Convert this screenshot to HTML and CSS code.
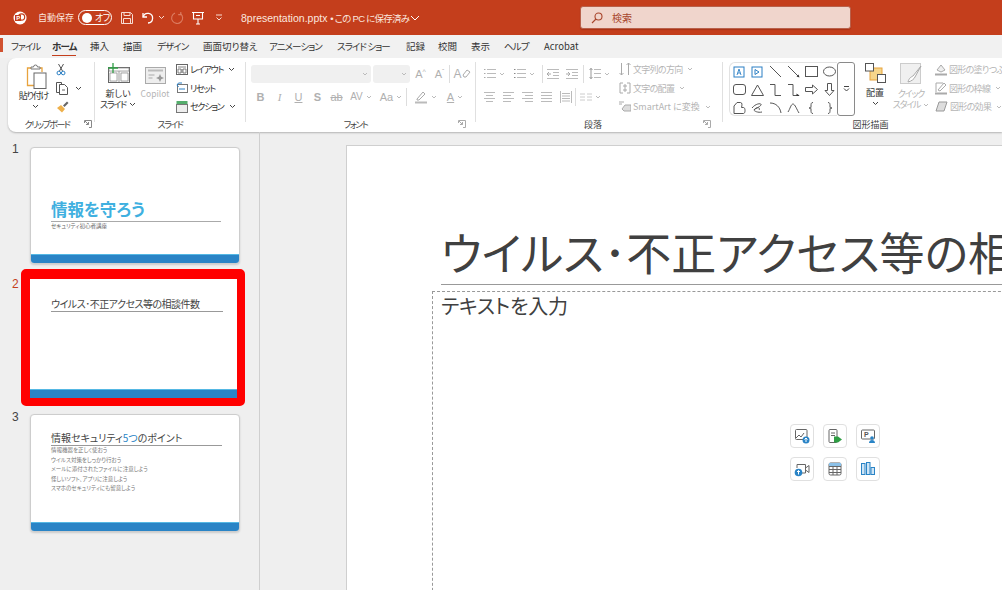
FILE: index.html
```html
<!DOCTYPE html>
<html lang="ja">
<head>
<meta charset="utf-8">
<title>8presentation.pptx</title>
<link rel="stylesheet" href="styles.css">
</head>
<body>
<header class="titlebar">
  <svg class="tb-logo" width="16" height="16" viewBox="0 0 16 16"><circle cx="8" cy="8" r="6.5" fill="#fff"/><circle cx="9.500" cy="7" r="3.200" fill="none" stroke="#c43e1c" stroke-width="1.200"/><rect x="3" y="5" width="6" height="6" fill="#c43e1c"/><text x="4.200" y="10" class="tb-logo-p">P</text></svg>
  <span class="tb-auto">自動保存</span>
  <span class="toggle"><i class="knob"></i><span class="toggle-text">オフ</span></span>
  <svg class="tb-save" width="14" height="14" viewBox="0 0 14 14" fill="none" stroke="#f8dcd2" stroke-width="1"><path d="M1.500 1.500h9l2 2v9h-11z"/><path d="M4 1.500v3h6v-3M3.500 12.500v-5h7v5"/></svg>
  <svg class="tb-undo" width="16" height="14" viewBox="0 0 16 14" fill="none" stroke="#fff" stroke-width="1.300"><path d="M2 2v4h4"/><path d="M2.200 5.800A4.800 4.800 0 1 1 7 12"/></svg>
  <svg class="tb-chev" width="7" height="5" viewBox="0 0 7 5" fill="none" stroke="#f8dcd2"><path d="M1 1l2.500 2.500L6 1"/></svg>
  <svg class="tb-redo" width="14" height="14" viewBox="0 0 14 14" fill="none" stroke="#dc7d62" stroke-width="1.100"><path d="M10.500 2.600A5.500 5.500 0 1 1 5 1.900"/><path d="M10.800 1v2.600H8.200"/></svg>
  <svg class="tb-pres" width="14" height="14" viewBox="0 0 14 14" fill="none" stroke="#fff" stroke-width="1.100"><path d="M1 1.500h12M2.500 1.500v6.500h9v-6.500M7 8v5M5 13h4M5 4.500h4"/></svg>
  <svg class="tb-more" width="8" height="7" viewBox="0 0 8 7" fill="none" stroke="#f8dcd2"><path d="M1 1h6M1.500 3.500L4 6l2.500-2.500"/></svg>
  <span class="tb-file">8presentation.pptx <span class="tb-loc">• この PC に保存済み</span></span>
  <svg class="tb-filechev" width="10" height="6" viewBox="0 0 10 6" fill="none" stroke="#fff"><path d="M1 1l4 4 4-4"/></svg>
  <div class="search">
    <svg width="12" height="12" viewBox="0 0 12 12" fill="none" stroke="#a8452c" stroke-width="1.100"><circle cx="7.500" cy="4.500" r="3.500"/><path d="M5 7l-4 4"/></svg>
    <span>検索</span>
  </div>
</header>

<nav class="tabs">
  <span class="tab kana">ファイル</span>
  <span class="tab tab-active kana">ホーム</span>
  <span class="tab">挿入</span>
  <span class="tab">描画</span>
  <span class="tab kana">デザイン</span>
  <span class="tab">画面切り替え</span>
  <span class="tab kana">アニメーション</span>
  <span class="tab kana">スライド ショー</span>
  <span class="tab">記録</span>
  <span class="tab">校閲</span>
  <span class="tab">表示</span>
  <span class="tab kana">ヘルプ</span>
  <span class="tab">Acrobat</span>
</nav>

<section class="ribbon">
  <div class="group g-clip">
    <div class="gbody">
      <div class="big b-paste">
        <svg class="big-icon i-paste" width="21" height="26" viewBox="0 0 21 26" fill="none"><path d="M5 4H1.500v17.500H8" stroke="#e8a33d" stroke-width="1.300"/><path d="M13 4h3v4" stroke="#e8a33d" stroke-width="1.300"/><path d="M5 5V3h2.500a2 2 0 0 1 4 0H14v2z" fill="#fff" stroke="#777"/><rect x="8" y="9" width="12" height="15.500" fill="#fff" stroke="#666"/></svg>
        <span class="big-label tight">貼り付け</span>
        <svg class="chev" width="7" height="5" viewBox="0 0 7 5"><path d="M1 1l2.500 2.500L6 1" fill="none" stroke="#444"/></svg>
      </div>
      <div class="smalls s-clip">
        <div class="srow"><svg width="10" height="13" viewBox="0 0 10 13" fill="none"><path d="M2.500 1l4 7M7.500 1l-4 7" stroke="#555"/><circle cx="2.800" cy="10" r="1.800" stroke="#2a7fc4"/><circle cx="7.200" cy="10" r="1.800" stroke="#2a7fc4"/></svg></div>
        <div class="srow srow-copy"><svg width="12" height="13" viewBox="0 0 12 13" fill="none" stroke="#555"><path d="M3.500 10.500H.5V.5h5v2"/><path d="M3.500 2.500h5l3 3v7h-8z" fill="#fff"/><path d="M6 8h3" stroke="#666"/></svg><svg class="copy-chev" width="7" height="5" viewBox="0 0 7 5"><path d="M1 1l2.500 2.500L6 1" fill="none" stroke="#444"/></svg></div>
        <div class="srow"><svg width="13" height="12" viewBox="0 0 13 12"><path d="M1 7l4-3 4 4-3 3.500z" fill="#eeb04b"/><path d="M7 4.500l4-4 1.500 1.500-4 4z" fill="#666"/></svg></div>
      </div>
    </div>
    <div class="glabel kana-label"><i></i><span>クリップボード</span><svg class="launch" width="8" height="8" viewBox="0 0 8 8" fill="none" stroke="#888"><path d="M.5 3V.5h7v7H5"/><path d="M1 1l3.500 3.500M4.500 2v2.500H2"/></svg></div>
  </div>
  <div class="sep"></div>

  <div class="group g-slide">
    <div class="gbody">
      <div class="big b-new">
        <svg class="big-icon i-new" width="23" height="20" viewBox="0 0 23 20" fill="none"><rect x="1.500" y="4.500" width="21" height="15" fill="#f2f2f2" stroke="#666"/><path d="M2 5h20v3H2zM12 8v11M3 10h7v8H3zM14 10h7v8h-7z" fill="#fff" stroke="#888" stroke-width=".7"/><path d="M6 0v10M1 5h10" stroke="#2f9e44" stroke-width="1.300"/></svg>
        <span class="big-label">新しい</span>
        <span class="big-label tight">スライド<svg class="chev-in" width="7" height="5" viewBox="0 0 7 5"><path d="M1 1l2.500 2.500L6 1" fill="none" stroke="#444"/></svg></span>
      </div>
      <div class="big b-copilot">
        <svg class="big-icon i-copilot" width="21" height="17" viewBox="0 0 21 17" fill="none"><rect x=".5" y=".5" width="20" height="16" fill="#eee" stroke="#aaa"/><path d="M3 3.500h15" stroke="#bbb" stroke-width="2"/><path d="M3.500 8h6M3.500 11h4" stroke="#aaa"/><path d="M15 7l1.200 2.800L19 11l-2.800 1.200L15 15l-1.200-2.800L11 11l2.800-1.200z" fill="#999"/></svg>
        <span class="big-label muted cop-label">Copilot</span>
      </div>
      <div class="smalls s-slide">
        <div class="srow"><svg width="12" height="11" viewBox="0 0 12 11" fill="none" stroke="#666"><rect x=".5" y=".5" width="11" height="10"/><path d="M2 3h8M6 5v4M2 5h3v4H2zM7 5h3v4H7z" stroke-width=".8"/></svg><span class="tight">レイアウト</span><svg class="chev-in" width="7" height="5" viewBox="0 0 7 5"><path d="M1 1l2.500 2.500L6 1" fill="none" stroke="#444"/></svg></div>
        <div class="srow"><svg width="12" height="12" viewBox="0 0 12 12" fill="none"><rect x="1.500" y="2.500" width="10" height="8" stroke="#777"/><path d="M6 1H2.500L1 3l1.500 2" stroke="#2a7fc4"/><path d="M3 7h6" stroke="#2a7fc4"/></svg><span class="tight">リセット</span></div>
        <div class="srow"><svg width="12" height="12" viewBox="0 0 12 12" fill="none"><rect x=".5" y="0" width="11" height="3" fill="#54ad6c"/><rect x=".5" y="3.500" width="11" height="8" fill="#eee" stroke="#777"/></svg><span class="tight">セクション</span><svg class="chev-in" width="7" height="5" viewBox="0 0 7 5"><path d="M1 1l2.500 2.500L6 1" fill="none" stroke="#444"/></svg></div>
      </div>
    </div>
    <div class="glabel kana-label"><i></i><span>スライド</span><i></i></div>
  </div>
  <div class="sep"></div>

  <div class="group g-font">
    <div class="gbody gcol">
      <div class="frow fr1">
        <span class="combo c-name"><svg width="6" height="4" viewBox="0 0 6 4"><path d="M1 1l2 2 2-2" fill="none" stroke="#bbb"/></svg></span>
        <span class="combo c-size"><svg width="6" height="4" viewBox="0 0 6 4"><path d="M1 1l2 2 2-2" fill="none" stroke="#bbb"/></svg></span>
        <span class="gl gl-a w19">A<sup>^</sup></span>
        <span class="gl gl-a2 w19">A<sup>ˇ</sup></span>
        <span class="vsep"></span>
        <span class="gl gl-ap">A<svg width="9" height="9" viewBox="0 0 9 9"><path d="M1 6l4-5 3 2-4 5H2z" fill="none" stroke="#aaa"/></svg></span>
      </div>
      <div class="frow fr2">
        <span class="gl w19 bold">B</span>
        <span class="gl w19 ital">I</span>
        <span class="gl w19 under">U</span>
        <span class="gl w19 bold">S</span>
        <span class="gl w19 strike">ab</span>
        <span class="gl w30 gl-av">AV<svg class="chev-in" width="6" height="4" viewBox="0 0 6 4"><path d="M1 1l2 2 2-2" fill="none" stroke="#bbb"/></svg></span>
        <span class="gl w30 gl-aa">Aa<svg class="chev-in" width="6" height="4" viewBox="0 0 6 4"><path d="M1 1l2 2 2-2" fill="none" stroke="#bbb"/></svg></span>
        <span class="vsep"></span>
        <span class="gl w30 gl-pen"><svg width="14" height="14" viewBox="0 0 14 14"><path d="M3 9l6-7 2 2-6 6H3z" fill="none" stroke="#aaa"/><rect x="1" y="11.500" width="12" height="2" fill="#bbb"/></svg><svg class="chev-in" width="6" height="4" viewBox="0 0 6 4"><path d="M1 1l2 2 2-2" fill="none" stroke="#bbb"/></svg></span>
        <span class="gl w30 gl-col">A<svg class="chev-in" width="6" height="4" viewBox="0 0 6 4"><path d="M1 1l2 2 2-2" fill="none" stroke="#bbb"/></svg></span>
      </div>
    </div>
    <div class="glabel kana-label lab-font"><i></i><span>フォント</span><svg class="launch" width="8" height="8" viewBox="0 0 8 8" fill="none" stroke="#aaa"><path d="M.5 3V.5h7v7H5"/><path d="M1 1l3.500 3.500M4.500 2v2.500H2"/></svg></div>
  </div>
  <div class="sep"></div>

  <div class="group g-para">
    <div class="gbody">
      <div class="gcol para-left">
        <div class="frow fr1">
          <span class="pi pw28"><svg width="12" height="11" viewBox="0 0 12 11"><path d="M3 1.500h9M3 5.500h9M3 9.500h9" stroke="#bbb"/><path d="M0 1.500h1.500M0 5.500h1.500M0 9.500h1.500" stroke="#aaa"/></svg><svg class="chev-in" width="6" height="4" viewBox="0 0 6 4"><path d="M1 1l2 2 2-2" fill="none" stroke="#bbb"/></svg></span>
          <span class="pi pw28"><svg width="12" height="11" viewBox="0 0 12 11"><path d="M3 1.500h9M3 5.500h9M3 9.500h9" stroke="#bbb"/><path d="M0 1.500h1.500M0 5.500h1.500M0 9.500h1.500" stroke="#888"/></svg><svg class="chev-in" width="6" height="4" viewBox="0 0 6 4"><path d="M1 1l2 2 2-2" fill="none" stroke="#bbb"/></svg></span>
          <span class="vsep vsep-a"></span>
          <span class="pi pw19"><svg width="12" height="10" viewBox="0 0 12 10"><path d="M0 .5h12M6 3.500h6M6 6.500h6M0 9.500h12" stroke="#bbb"/><path d="M4 5H0M2 3L0 5l2 2" stroke="#aaa" fill="none"/></svg></span>
          <span class="pi pw19"><svg width="12" height="10" viewBox="0 0 12 10"><path d="M0 .5h12M6 3.500h6M6 6.500h6M0 9.500h12" stroke="#bbb"/><path d="M0 5h4M2 3l2 2-2 2" stroke="#aaa" fill="none"/></svg></span>
          <span class="vsep vsep-b"></span>
          <span class="pi pw28 pi-line"><svg width="12" height="11" viewBox="0 0 12 11"><path d="M5 1.500h7M5 5.500h7M5 9.500h7" stroke="#bbb"/><path d="M2 0v11M.5 2L2 .5 3.500 2M.5 9L2 10.500 3.500 9" stroke="#999" fill="none"/></svg><svg class="chev-in" width="6" height="4" viewBox="0 0 6 4"><path d="M1 1l2 2 2-2" fill="none" stroke="#bbb"/></svg></span>
        </div>
        <div class="frow fr2">
          <span class="pi pw19"><svg width="11" height="10" viewBox="0 0 11 10"><path d="M0 .5h11M2 3.500h7M0 6.500h11M2 9.500h7" stroke="#bbb"/></svg></span>
          <span class="pi pw19"><svg width="11" height="10" viewBox="0 0 11 10"><path d="M0 .5h11M0 3.500h8M0 6.500h11M0 9.500h8" stroke="#bbb"/></svg></span>
          <span class="pi pw19"><svg width="11" height="10" viewBox="0 0 11 10"><path d="M0 .5h11M3 3.500h8M0 6.500h11M3 9.500h8" stroke="#bbb"/></svg></span>
          <span class="pi pw19"><svg width="11" height="10" viewBox="0 0 11 10"><path d="M0 .5h11M0 3.500h11M0 6.500h11M0 9.500h11" stroke="#bbb"/></svg></span>
          <span class="pi pw19"><svg width="12" height="12" viewBox="0 0 12 12"><path d="M.5 0v12M11.500 0v12M2 2.500h8M2 5h8M2 7.500h8M2 10h8" stroke="#bbb"/></svg></span>
          <span class="vsep"></span>
          <span class="pi pw28 col"><svg width="12" height="8" viewBox="0 0 12 8"><path d="M0 1h5M0 4h5M0 7h5M7 1h5M7 4h5M7 7h5" stroke="#ccc"/></svg><svg class="chev-in" width="6" height="4" viewBox="0 0 6 4"><path d="M1 1l2 2 2-2" fill="none" stroke="#bbb"/></svg></span>
        </div>
      </div>
      <div class="smalls s-para muted">
        <div class="srow"><svg width="12" height="13" viewBox="0 0 12 13"><path d="M2.500 0v12M.5 10l2 2 2-2M9.500 12V0M7.500 2l2-2 2 2" fill="none" stroke="#aaa"/></svg><span class="semi">文字列の方向</span><svg class="chev-in" width="6" height="4" viewBox="0 0 6 4"><path d="M1 1l2 2 2-2" fill="none" stroke="#bbb"/></svg></div>
        <div class="srow"><svg width="12" height="12" viewBox="0 0 12 12"><path d="M4 1H1v10h3M8 1h3v10H8M6 2v8M4 4h4M4 8h4" fill="none" stroke="#aaa"/></svg><span class="semi">文字の配置</span><svg class="chev-in" width="6" height="4" viewBox="0 0 6 4"><path d="M1 1l2 2 2-2" fill="none" stroke="#bbb"/></svg></div>
        <div class="srow"><svg width="12" height="11" viewBox="0 0 12 11"><path d="M0 1h5M0 3h3M3 8l3-4h6v6H5z" fill="#ddd" stroke="#aaa"/></svg><span>SmartArt に変換</span><svg class="chev-in" width="6" height="4" viewBox="0 0 6 4"><path d="M1 1l2 2 2-2" fill="none" stroke="#bbb"/></svg></div>
      </div>
    </div>
    <div class="glabel lab-para"><i></i><span>段落</span><svg class="launch" width="8" height="8" viewBox="0 0 8 8" fill="none" stroke="#aaa"><path d="M.5 3V.5h7v7H5"/><path d="M1 1l3.500 3.500M4.500 2v2.500H2"/></svg></div>
  </div>
  <div class="sep"></div>

  <div class="group g-draw">
    <div class="gbody">
      <div class="gallery">
        <div class="cells">
          <span><svg width="12" height="12" viewBox="0 0 12 12"><rect x="1" y="1" width="10" height="10" fill="none" stroke="#2a7fc4"/><path d="M4 9l2-6 2 6M4.800 7h2.400" fill="none" stroke="#2a7fc4" stroke-width=".9"/></svg></span>
          <span><svg width="12" height="12" viewBox="0 0 12 12"><rect x="1" y="1" width="10" height="10" fill="none" stroke="#2a7fc4"/><path d="M4 3.500l4 2.500-4 2.500z" fill="none" stroke="#2a7fc4"/></svg></span>
          <span><svg width="13" height="13" viewBox="0 0 13 13"><path d="M1 1l11 11" stroke="#555"/></svg></span>
          <span><svg width="13" height="13" viewBox="0 0 13 13"><path d="M1 1l10 10" stroke="#555"/><path d="M12.500 12.500l-3-1 2-2z" fill="#333"/></svg></span>
          <span><svg width="13" height="11" viewBox="0 0 13 11"><rect x=".5" y=".5" width="12" height="10" fill="none" stroke="#555"/></svg></span>
          <span><svg width="13" height="11" viewBox="0 0 13 11"><ellipse cx="6.500" cy="5.500" rx="6" ry="4.500" fill="none" stroke="#555"/></svg></span>
          <span><svg width="13" height="11" viewBox="0 0 13 11"><rect x=".5" y=".5" width="12" height="10" rx="2.500" fill="none" stroke="#555"/></svg></span>
          <span><svg width="13" height="12" viewBox="0 0 13 12"><path d="M6.500 1L12.500 11.500H.5z" fill="none" stroke="#555"/></svg></span>
          <span><svg width="13" height="12" viewBox="0 0 13 12"><path d="M1 .5h5v11h6" fill="none" stroke="#555"/></svg></span>
          <span><svg width="13" height="12" viewBox="0 0 13 12"><path d="M1 .5h5v11h4" fill="none" stroke="#555"/><path d="M12.500 11.500l-3-2v4z" fill="#333"/></svg></span>
          <span><svg width="13" height="11" viewBox="0 0 13 11"><path d="M.5 3.500h7V1l5 4.500-5 4.500V7.500h-7z" fill="none" stroke="#555"/></svg></span>
          <span><svg width="11" height="13" viewBox="0 0 11 13"><path d="M3.500.5h4v7H10l-4.500 5-4.500-5h2.500z" fill="none" stroke="#555"/></svg></span>
          <span><svg width="13" height="12" viewBox="0 0 13 12"><path d="M1 11.500V4l3-3.500h3.500c2 0 1.500 3 1 5h2c2 0 2 6 0 6z" fill="none" stroke="#555"/></svg></span>
          <span><svg width="13" height="12" viewBox="0 0 13 12"><path d="M1 6c4-5 10-5 9-3S3 7 3 8s4 3 8 2" fill="none" stroke="#555"/><path d="M3 8c3-4 7-2 5 0" fill="none" stroke="#555"/></svg></span>
          <span><svg width="13" height="12" viewBox="0 0 13 12"><path d="M1 1c6 0 10 4 11 10" fill="none" stroke="#555"/></svg></span>
          <span><svg width="13" height="12" viewBox="0 0 13 12"><path d="M1 10c2-3 3-8 5-8s4 6 6 9" fill="none" stroke="#555"/></svg></span>
          <span><svg width="7" height="12" viewBox="0 0 7 12"><path d="M5 .5C3 .5 3 2 3 4S3 6 1 6c2 0 2 0 2 2s0 3.500 2 3.500" fill="none" stroke="#555"/></svg></span>
          <span><svg width="7" height="12" viewBox="0 0 7 12"><path d="M2 .5C4 .5 4 2 4 4s0 2 2 2c-2 0-2 0-2 2s0 3.500-2 3.500" fill="none" stroke="#555"/></svg></span>
        </div>
        <div class="gal-more"><svg width="7" height="6" viewBox="0 0 7 6"><path d="M1 .5h5M1 2.500L3.500 5 6 2.500" fill="none" stroke="#444"/></svg></div>
      </div>
      <div class="big b-arr">
        <svg class="big-icon" width="21" height="20" viewBox="0 0 21 20"><rect x="5" y="5" width="12" height="12" fill="#f6d58a" stroke="#e8a33d"/><rect x=".5" y=".5" width="8" height="7.500" fill="#fff" stroke="#555"/><rect x="12.500" y="11.500" width="8" height="8" fill="#fff" stroke="#555"/></svg>
        <span class="big-label">配置</span>
        <svg class="chev" width="7" height="5" viewBox="0 0 7 5"><path d="M1 1l2.500 2.500L6 1" fill="none" stroke="#444"/></svg>
      </div>
      <div class="big b-quick muted">
        <svg class="big-icon" width="22" height="21" viewBox="0 0 22 21"><rect x=".5" y=".5" width="20" height="20" fill="#f0f0f0" stroke="#ccc"/><path d="M8 19c1-4 3-5 5-6l8-10-6 11c-1 2-3 4-7 5z" fill="#fff" stroke="#aaa"/></svg>
        <span class="big-label tight">クイック</span>
        <span class="big-label tight">スタイル<svg class="chev-in" width="6" height="4" viewBox="0 0 6 4"><path d="M1 1l2 2 2-2" fill="none" stroke="#bbb"/></svg></span>
      </div>
      <div class="smalls s-draw muted">
        <div class="srow"><svg width="12" height="13" viewBox="0 0 12 13"><path d="M2 7l4-5 4 5-4 2z" fill="#eee" stroke="#aaa"/><path d="M0 11.500h12" stroke="#aaa" stroke-width="2"/></svg><span class="semi">図形の塗りつぶし</span></div>
        <div class="srow"><svg width="12" height="13" viewBox="0 0 12 13"><path d="M1 1h7M1 1v9M3 8l6-7 2 2-6 6z" fill="none" stroke="#aaa"/><path d="M0 11.500h12" stroke="#aaa" stroke-width="2"/></svg><span class="semi">図形の枠線</span><svg class="chev-in" width="6" height="4" viewBox="0 0 6 4"><path d="M1 1l2 2 2-2" fill="none" stroke="#bbb"/></svg></div>
        <div class="srow"><svg width="13" height="11" viewBox="0 0 13 11"><path d="M4 1h8L9 10H1z" fill="#ddd" stroke="#999"/></svg><span class="semi">図形の効果</span><svg class="chev-in" width="6" height="4" viewBox="0 0 6 4"><path d="M1 1l2 2 2-2" fill="none" stroke="#bbb"/></svg></div>
      </div>
    </div>
    <div class="glabel lab-draw"><i></i><span>図形描画</span><i></i></div>
  </div>
</section>

<main class="work">
  <aside class="sidebar">
    <div class="srow-slide">
      <span class="num">1</span>
      <div class="thumb">
        <div class="t-body t1-body">
          <div class="t1-title">情報を守ろう</div>
          <div class="t1-line"></div>
          <div class="t1-sub">セキュリティ初心者講座</div>
        </div>
        <div class="t-foot"></div>
      </div>
    </div>
    <div class="srow-slide row-sel">
      <span class="num num-sel">2</span>
      <div class="thumb thumb-sel">
        <div class="t-body t2-body">
          <div class="t-title t2-title">ウイルス･不正アクセス等の相談件数</div>
        </div>
        <div class="t-foot"></div>
      </div>
    </div>
    <div class="srow-slide row-3">
      <span class="num">3</span>
      <div class="thumb">
        <div class="t-body t3-body">
          <div class="t-title">情報セキュリティ<em>5つ</em>のポイント</div>
          <ul class="t3-list">
            <li>情報機器を正しく使おう</li>
            <li>ウイルス対策をしっかり行おう</li>
            <li>メールに添付されたファイルに注意しよう</li>
            <li>怪しいソフト、アプリに注意しよう</li>
            <li>スマホのセキュリティにも留意しよう</li>
          </ul>
        </div>
        <div class="t-foot"></div>
      </div>
    </div>
  </aside>
  <div class="stage">
    <article class="slide">
      <h1 class="s-title">ウイルス･不正アクセス等の相談件数</h1>
      <div class="placeholder">
        <p class="ph-text">テキストを入力</p>
        <div class="tiles">
          <span class="tile"><svg width="16" height="16" viewBox="0 0 16 16" fill="none"><rect x="1.500" y="1.500" width="11.500" height="10" rx="1" stroke="#666"/><path d="M2 10l3-3 2 2 3-4" stroke="#666"/><circle cx="12" cy="12" r="3.500" fill="#2a84c6"/><path d="M12 14v-4M10.500 11.500L12 10l1.500 1.500" stroke="#fff"/></svg></span>
          <span class="tile"><svg width="16" height="16" viewBox="0 0 16 16" fill="none"><rect x="2" y="1.500" width="8" height="13" rx="1" stroke="#666"/><path d="M4 5h4M4 7.500h4" stroke="#666"/><path d="M7 8.500h4l4 3-4 3H7z" fill="#2f9e44"/></svg></span>
          <span class="tile"><svg width="16" height="16" viewBox="0 0 16 16" fill="none"><rect x="1.500" y="2" width="13" height="9" rx="1" stroke="#666"/><text x="4" y="9" class="tile-p">P</text><circle cx="12" cy="10" r="1.800" fill="#2a84c6"/><path d="M9 15c0-2 1.500-3 3-3s3 1 3 3z" fill="#2a84c6"/></svg></span>
          <span class="tile"><svg width="16" height="16" viewBox="0 0 16 16" fill="none"><path d="M3 7V3.500h8.500v8.500H8M11.500 7L15 4.500v7L11.500 9" stroke="#666"/><circle cx="4.500" cy="11.500" r="3.800" fill="#2a84c6"/><path d="M4.500 13.500v-4M3 11l1.500-1.500L6 11" stroke="#fff"/></svg></span>
          <span class="tile"><svg width="16" height="16" viewBox="0 0 16 16" fill="none"><rect x="2" y="2" width="12" height="12" rx="1.500" stroke="#666"/><rect x="2" y="2" width="12" height="3.500" fill="#8cc1e8"/><path d="M2 5.500h12M2 8.500h12M2 11.500h12M6 5.500V14M10 5.500V14" stroke="#666"/></svg></span>
          <span class="tile"><svg width="16" height="16" viewBox="0 0 16 16" fill="#cfe5f6" stroke="#2a84c6"><rect x="1.500" y="2.500" width="3.500" height="11"/><rect x="6.500" y="1.500" width="3.500" height="12"/><rect x="11" y="6.500" width="3.500" height="7"/></svg></span>
        </div>
      </div>
    </article>
  </div>
</main>
</body>
</html>
```

FILE: styles.css
```css
* { box-sizing: border-box; }
html, body { margin: 0; height: 590px; overflow: hidden; }
body {
  width: 1002px;
  background: #efefef;
  font-family: "Noto Sans CJK JP", "Liberation Sans", sans-serif;
  font-feature-settings: "palt";
  color: #333;
  display: flex;
  flex-direction: column;
}
svg { display: block; flex: none; }

/* title bar */
.titlebar { height: 35px; flex: none; background: #c43e1c; display: flex; align-items: center; color: #fbe6df; }
.tb-logo { margin-left: 12px; }
.tb-logo-p { font: bold 6px "Liberation Sans", sans-serif; fill: #fff; }
.tb-auto { margin-left: 10px; font-size: 9px; width: 40px; white-space: nowrap; }
.toggle { margin-left: 0; width: 34px; height: 15px; border: 1px solid #fff; border-radius: 8px; display: flex; align-items: center; padding-left: 3px; }
.knob { width: 10px; height: 10px; background: #fff; border-radius: 50%; flex: none; }
.toggle-text { font-size: 9px; color: #fff; margin-left: 3px; white-space: nowrap; letter-spacing: -.5px; }
.tb-save { margin-left: 8px; }
.tb-undo { margin-left: 7px; }
.tb-chev { margin-left: 1px; }
.tb-redo { margin-left: 5px; }
.tb-pres { margin-left: 7px; }
.tb-more { margin-left: 10px; }
.tb-file { margin-left: 18px; font-family: "Liberation Sans", "Noto Sans CJK JP", sans-serif; font-size: 10.5px; white-space: nowrap; width: 169px; }
.tb-loc { font-size: 9.5px; letter-spacing: -.75px; }
.search { margin-left: 160px; width: 271px; height: 23px; background: #f0d5cc; border: 1px solid #b9604a; border-radius: 3px; display: flex; align-items: center; padding-left: 10px; font-size: 10px; color: #a8452c; gap: 9px; box-shadow: 0 1px 1px rgba(120,30,10,.35); }

/* tabs */
.tabs { height: 23px; flex: none; background: #f1f1f1; display: grid; grid-template-columns: 41px 38px 33px 34px 46px 66px 68px 69px 32px 33px 33px 40px 50px; justify-content: start; align-items: center; padding-left: 11px; font-size: 9.5px; color: #333; white-space: nowrap; position: relative; }
.tabs::before { content: ""; position: absolute; left: 0; top: 3px; width: 3px; height: 14px; background: #d0512f; }
.tab { line-height: 16px; padding-bottom: 1px; justify-self: start; }
.kana { letter-spacing: -.9px; }
.tab-active { font-weight: 700; border-bottom: 1.5px solid #c43e1c; color: #333; }

/* ribbon */
.ribbon { height: 74px; flex: none; margin-left: 8px; background: #fff; border-radius: 8px 0 0 8px; display: flex; box-shadow: 0 1px 2px rgba(0,0,0,.25); font-size: 9px; overflow: hidden; }
.sep { width: 1px; flex: none; background: #e0e0e0; margin: 4px 0 10px; }
.group { flex: none; display: grid; grid-template-rows: 58px 16px; min-width: 0; }
.g-clip { width: 86px; }
.g-slide { width: 150px; }
.g-font { width: 229px; }
.g-para { width: 246px; }
.g-draw { flex: 1; min-width: 0; }
.gbody { display: flex; padding-top: 2px; min-width: 0; overflow: hidden; }
.gcol { flex-direction: column; }
.glabel { display: grid; grid-template-columns: 1fr auto 1fr; align-items: center; font-size: 9px; color: #444; white-space: nowrap; }
.kana-label { letter-spacing: -1.5px; }
.g-clip .glabel { padding-right: 8px; }
.lab-font { padding-right: 10px; }
.lab-para { padding-right: 12px; }
.lab-draw { padding-left: 16px; }
.launch { justify-self: end; margin-right: -1px; }
.g-clip .launch { margin-right: -6px; }
.tight { letter-spacing: -1.2px; }
.semi { letter-spacing: -.7px; }

/* big buttons */
.big { display: flex; flex-direction: column; align-items: center; flex: none; }
.big-label { line-height: 11px; white-space: nowrap; display: flex; align-items: center; }
.chev { margin-top: 3px; }
.chev-in { margin-left: 3px; }
.muted { color: #b5b5b5; }
.cop-label { font-size: 8.5px; }
.b-paste { margin-left: 9px; width: 33px; padding-top: 4px; }
.i-paste { margin-left: 5px; }
.b-paste .chev { margin-left: 3px; }
.b-new { margin-left: 5px; width: 36px; padding-top: 3px; }
.i-new { margin-bottom: 5px; }
.b-copilot { margin-left: 4px; width: 30px; padding-top: 7px; }
.i-copilot { margin-bottom: 4px; }
.b-arr { margin-left: 6px; width: 28px; padding-top: 3px; }
.b-arr .big-icon { margin-bottom: 4px; }
.b-quick { margin-left: 6px; width: 32px; padding-top: 3px; }
.b-quick .big-icon { margin-bottom: 4px; }

/* small rows */
.smalls { flex: none; display: flex; flex-direction: column; white-space: nowrap; }
.srow { height: 19px; display: flex; align-items: center; gap: 2px; }
.s-clip { margin-left: 4px; width: 38px; }
.s-clip .srow { padding-left: 2px; }
.srow-copy .copy-chev { margin-left: 5px; }
.s-slide { margin-left: 6px; }
.s-para { margin-left: 4px; }
.s-draw { margin-left: 8px; }

/* font group */
.frow { display: flex; align-items: center; height: 19px; color: #b0b0b0; flex: none; }
.fr1 { margin-top: 4px; padding-left: 5px; }
.fr2 { margin-top: 4px; padding-left: 5px; }
.combo { height: 18px; background: #f0f0f0; border-radius: 3px; display: flex; align-items: center; justify-content: flex-end; padding-right: 3px; }
.c-name { width: 120px; }
.c-size { width: 37px; margin-left: 2px; margin-right: 1px; }
.gl { display: flex; align-items: center; justify-content: center; font-family: "Liberation Sans", sans-serif; font-size: 11px; height: 19px; }
.gl sup { font-size: 7px; line-height: 1; margin-top: -4px; }
.w19 { width: 19px; }
.w30 { width: 30px; }
.bold { font-weight: 700; }
.ital { font-style: italic; font-family: "Liberation Serif", serif; }
.under { text-decoration: underline; }
.strike { text-decoration: line-through; }
.gl-av { font-size: 10px; }
.gl-pen { margin-left: 3px; }
.gl-ap { width: 20px; font-size: 12px; margin-left: 2px; }
.gl-col { text-decoration: underline; text-underline-offset: 1px; }
.vsep { width: 1px; height: 18px; background: #ddd; flex: none; }
.vsep-a { margin-left: 6px; }
.vsep-b { margin-left: 2px; margin-right: 1px; }

/* paragraph group */
.para-left { display: flex; width: 139px; flex: none; }
.pi { display: flex; align-items: center; justify-content: flex-start; height: 19px; flex: none; }
.pi.pw28 { width: 30px; padding-left: 8px; }
.pw19 { width: 19px; padding-left: 4px; }
.g-para .fr1, .g-para .fr2 { padding-left: 0; }
.g-para .fr2 .pw19:first-child { margin-left: 4px; }
.pi.pi-line { padding-left: 4px; }
.pi.col { padding-left: 4px; }

/* shapes */
.gallery { margin: 2px 0 0 6px; width: 126px; height: 54px; display: flex; flex: none; }
.cells { width: 108px; display: grid; grid-template-columns: repeat(6, 18px); grid-auto-rows: 18px; background: #fff; border: 1px solid #e2e2e2; border-right: 0; border-radius: 6px 0 0 6px; }
.cells span { display: flex; align-items: center; justify-content: center; margin-top: -1px; }
.gal-more { width: 18px; border: 1px solid #8a8a8a; border-radius: 3px; display: flex; align-items: center; justify-content: center; background: #fff; }

/* work area */
.work { flex: 1; min-height: 0; display: flex; }
.sidebar { width: 260px; flex: none; border-right: 1px solid #cfcfcf; padding-top: 15px; display: flex; flex-direction: column; }
.srow-slide { display: flex; position: relative; height: 117px; padding-left: 30px; }
.row-sel { height: 137px; margin-top: 5px; padding-left: 21px; }
.row-3 { height: 118px; margin-top: 8px; }
.num { position: absolute; left: 12px; top: -4px; font-family: "Liberation Sans", sans-serif; font-size: 12px; color: #444; line-height: 12px; }
.row-sel .num { top: 9px; color: #c43e1c; }
.row-3 .num { top: -3px; }
.thumb { width: 210px; height: 100%; background: #fff; border: 1px solid #cdcdcd; border-radius: 4px; overflow: hidden; display: flex; flex-direction: column; box-shadow: 0 1px 2px rgba(0,0,0,.15); }
.thumb-sel { width: 224px; border-style: solid; border-color: #f00; border-width: 10px 8px 8px 9px; border-radius: 5px; box-shadow: none; }
.t-body { flex: 1; min-height: 0; padding-left: 20px; padding-right: 17px; }
.t-foot { height: 9px; flex: none; background: #2a84c6; border-top: 1px solid #55b8e4; }
.t1-body { padding-top: 50px; }
.t1-title { font-size: 16.5px; font-weight: 700; color: #3fb0e0; line-height: 23px; white-space: nowrap; }
.t1-line { height: 1px; background: #aaa; width: 170px; }
.t1-sub { font-size: 5.5px; line-height: 8px; color: #666; white-space: nowrap; }
.t-title { font-size: 10px; line-height: 15px; white-space: nowrap; border-bottom: 1px solid #999; color: #444; }
.t2-title { letter-spacing: -.5px; }
.t-title em { font-style: normal; color: #2a84c6; }
.t2-body { padding: 17px 14px 0 21px; }
.t3-body { padding-top: 15px; }
.t3-list { list-style: none; margin: 0; padding: 0; font-size: 5.5px; line-height: 9.5px; color: #777; white-space: nowrap; }

.stage { flex: 1; min-width: 0; padding: 13px 0 0 86px; overflow: hidden; }
.slide { background: #fff; height: 100%; width: 700px; border: 1px solid #cfcfcf; border-right: 0; border-bottom: 0; padding: 76px 0 0 85px; }
.s-title { margin: 0 0 6px 9px; font-size: 45px; font-weight: 400; line-height: 60px; height: 63px; white-space: nowrap; color: #404040; border-bottom: 1px solid #999; overflow: hidden; }
.placeholder { border: 1px dashed #999; border-right: 0; border-bottom: 0; height: 320px; padding-left: 8px; }
.ph-text { margin: 0; font-size: 20px; line-height: 28px; color: #404040; letter-spacing: -.2px; }
.tiles { margin: 104px 0 0 349px; display: grid; grid-template-columns: repeat(3, 24px); grid-auto-rows: 24px; gap: 9px; }
.tile { background: #fff; border: 1px solid #e0e0e0; border-radius: 4px; display: flex; align-items: center; justify-content: center; }
.tile-p { font: bold 7px "Liberation Sans", sans-serif; fill: #555; }
```
